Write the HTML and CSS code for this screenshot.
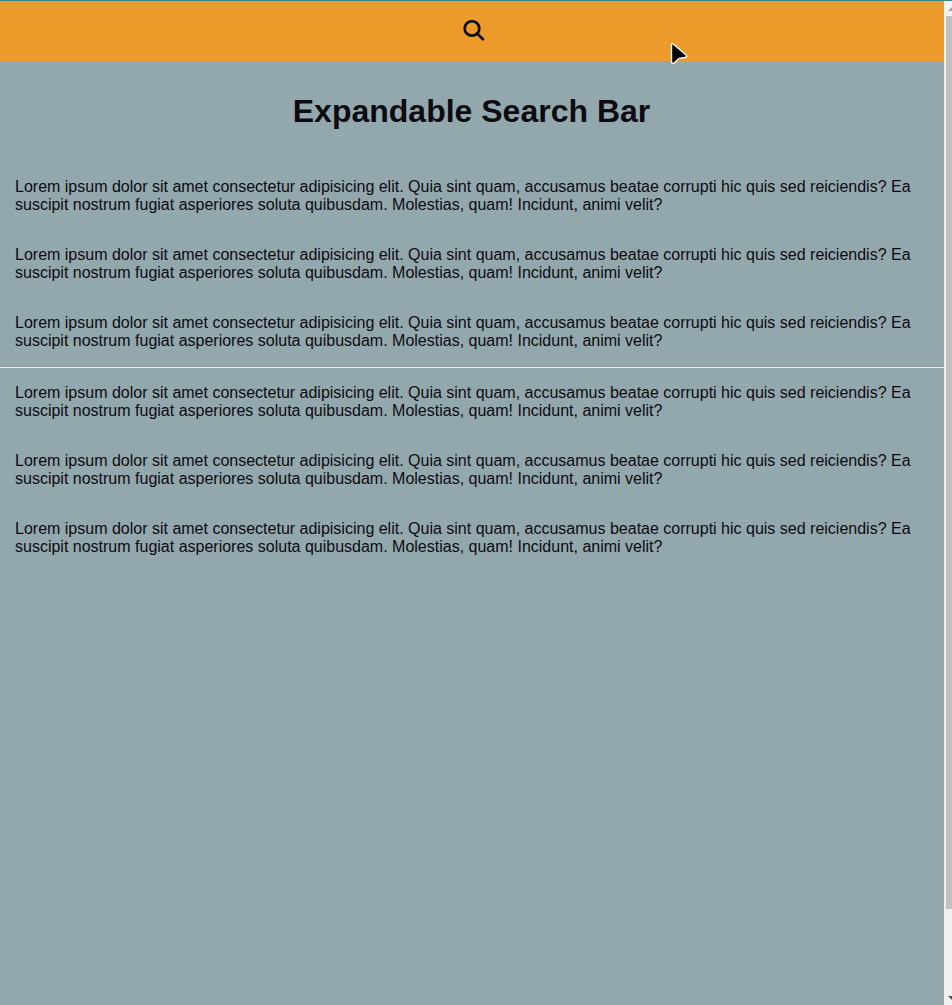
FILE: index.html
```html
<!DOCTYPE html>
<html lang="en">
<head>
<meta charset="utf-8">
<title>Expandable Search Bar</title>
<link rel="stylesheet" href="styles.css">
</head>
<body>
<div class="viewport">
  <div class="page">
    <header class="search-bar">
      <svg class="search-icon" width="22" height="22" viewBox="0 0 22 22" fill="none" stroke="#0d0b12" stroke-linecap="round"><circle cx="9" cy="8.4" r="7.3" stroke-width="2.7"/><path d="M14 13.4 20 19.3" stroke-width="2.7"/></svg>
    </header>
    <main>
      <h1 class="title">Expandable Search Bar</h1>
      <p class="copy">Lorem ipsum dolor sit amet consectetur adipisicing elit. Quia sint quam, accusamus beatae corrupti hic quis sed reiciendis? Ea suscipit nostrum fugiat asperiores soluta quibusdam. Molestias, quam! Incidunt, animi velit?</p>
      <p class="copy">Lorem ipsum dolor sit amet consectetur adipisicing elit. Quia sint quam, accusamus beatae corrupti hic quis sed reiciendis? Ea suscipit nostrum fugiat asperiores soluta quibusdam. Molestias, quam! Incidunt, animi velit?</p>
      <p class="copy">Lorem ipsum dolor sit amet consectetur adipisicing elit. Quia sint quam, accusamus beatae corrupti hic quis sed reiciendis? Ea suscipit nostrum fugiat asperiores soluta quibusdam. Molestias, quam! Incidunt, animi velit?</p>
      <hr class="rule">
      <p class="copy">Lorem ipsum dolor sit amet consectetur adipisicing elit. Quia sint quam, accusamus beatae corrupti hic quis sed reiciendis? Ea suscipit nostrum fugiat asperiores soluta quibusdam. Molestias, quam! Incidunt, animi velit?</p>
      <p class="copy">Lorem ipsum dolor sit amet consectetur adipisicing elit. Quia sint quam, accusamus beatae corrupti hic quis sed reiciendis? Ea suscipit nostrum fugiat asperiores soluta quibusdam. Molestias, quam! Incidunt, animi velit?</p>
      <p class="copy">Lorem ipsum dolor sit amet consectetur adipisicing elit. Quia sint quam, accusamus beatae corrupti hic quis sed reiciendis? Ea suscipit nostrum fugiat asperiores soluta quibusdam. Molestias, quam! Incidunt, animi velit?</p>
    </main>
  </div>
  <div class="scrollbar">
    <svg class="arrow-up" width="6" height="15" viewBox="0 0 6 15"><path d="M2 10 6 6V10Z" fill="#a3a3a3"/></svg>
    <div class="thumb"></div>
    <svg class="arrow-down" width="6" height="10" viewBox="0 0 6 10"><path d="M2 1H6V5Z" fill="#505050"/></svg>
  </div>
</div>
<svg class="cursor" width="20" height="24" viewBox="0 0 20 24"><path d="M2.5 3.2Q2.5.8 4.5 2.2L16.9 12.8Q18.6 15 16 15.5L10.2 16.3 5.4 20.8Q2.7 22.4 2.5 19.6Z" fill="#000" stroke="#fff" stroke-width="1.4"/></svg>
</body>
</html>
```
FILE: styles.css
```css
* { box-sizing: border-box; }
body {
  margin: 0;
  height: 1005px;
  overflow: hidden;
  font: 16px/18px "Liberation Sans", Arial, sans-serif;
  color: #0d0b12;
  background: #93a8ac;
}
.viewport {
  display: flex;
  height: 1005px;
  border-top: 1px solid #38868c;
}
.page { width: 944px; }
.search-bar {
  display: flex;
  justify-content: center;
  height: 60px;
  padding: 19px 0 0 3px;
  background: #ec9a29;
}
.search-icon {
  display: block;
  overflow: visible;
}
.title {
  margin: 0;
  padding: 32px 1px 33px 0;
  font-size: 32px;
  line-height: 36px;
  text-align: center;
}
.copy {
  margin: 0;
  padding: 16px 15px;
}
.rule {
  height: 2px;
  margin: 0;
  border: 0;
  border-top: 1px solid #9a9799;
  border-bottom: 1px solid #eeeeee;
}
.scrollbar {
  display: flex;
  flex-direction: column;
  width: 8px;
  padding-left: 2px;
  background: #f1f1f1;
}
.thumb {
  height: 893px;
  background: #c1c1c1;
}
.arrow-up, .arrow-down {
  display: block;
  flex: none;
}
.arrow-down { margin-top: auto; }
.cursor {
  position: absolute;
  left: 669px;
  top: 42px;
}
```
